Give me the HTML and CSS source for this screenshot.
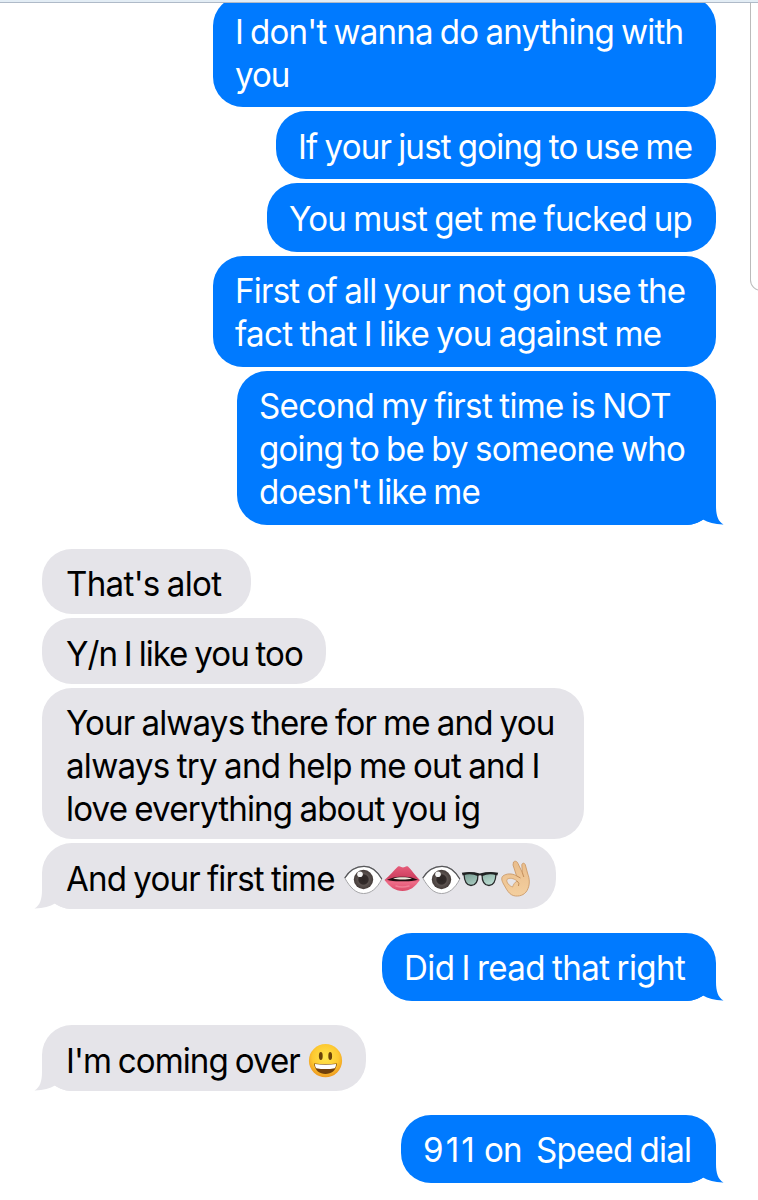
FILE: index.html
```html
<!DOCTYPE html>
<html lang="en">
<head>
<meta charset="utf-8">
<title>Messages</title>
<link rel="stylesheet" href="styles.css">
</head>
<body>
<svg class="defs" width="0" height="0" aria-hidden="true">
  <defs>
    <radialGradient id="iris"><stop offset="0" stop-color="#2c2625"/><stop offset=".48" stop-color="#332b2a"/><stop offset=".58" stop-color="#5c5350"/><stop offset="1" stop-color="#463d3b"/></radialGradient>
    <linearGradient id="lip" x1="0" y1="0" x2="0" y2="1"><stop offset="0" stop-color="#e65c7a"/><stop offset=".45" stop-color="#cf3f60"/><stop offset=".65" stop-color="#ee6c88"/><stop offset="1" stop-color="#dc4a69"/></linearGradient>
    <linearGradient id="lens" x1="0" y1="0" x2="1" y2="1"><stop offset="0" stop-color="#769b91"/><stop offset="1" stop-color="#c3e4d9"/></linearGradient>
    <linearGradient id="skin" x1="0" y1="0" x2="0" y2="1"><stop offset="0" stop-color="#e9bd8c"/><stop offset="1" stop-color="#f4cf9f"/></linearGradient>
    <radialGradient id="face" cx=".5" cy=".4" r=".6"><stop offset="0" stop-color="#ffe64d"/><stop offset=".65" stop-color="#fdc931"/><stop offset="1" stop-color="#ee9820"/></radialGradient>
    <symbol id="eye" viewBox="0 0 39 43">
      <path d="M.8 20C6 11.500 12 8.300 20 8.300S33 12.500 37.800 21C33 30.500 27 35.500 19.500 35.500S6 29.500 .8 20Z" fill="#fff" stroke="#a5a5a8"/>
      <path d="M.8 20C6 11.500 12 8.300 20 8.300S33 12.500 37.800 21" fill="none" stroke="#58585b" stroke-width="1.300"/>
      <circle cx="19.500" cy="21.500" r="9.700" fill="url(#iris)"/>
      <circle cx="16" cy="16.200" r="2.800" fill="#fff" opacity=".95"/>
    </symbol>
    <symbol id="tail" viewBox="0 0 40 34"><path d="M0 0H32V15C32 24 34 30.500 39.500 33.400C31 33.500 24 31.500 19 28.500C14 32 8 34 0 34Z"/></symbol>
  </defs>
</svg>
<div class="top-rule"></div>
<div class="side-rule"></div>
<main class="thread">
  <div class="bubble sent w1"><span class="line l1">I don't wanna do anything with</span><span class="line l2">you</span></div>
  <div class="bubble sent w2"><span class="line l3">If your just going to use me</span></div>
  <div class="bubble sent w3"><span class="line l4">You must get me fucked up</span></div>
  <div class="bubble sent w4"><span class="line l5">First of all your not gon use the</span><span class="line l6">fact that I like you against me</span></div>
  <div class="bubble sent w5 last"><span class="line l7">Second my first time is NOT</span><span class="line l8">going to be by someone who</span><span class="line l9">doesn't like me</span><svg class="tail"><use href="#tail"/></svg></div>
  <div class="bubble received w6"><span class="line l10">That's alot</span></div>
  <div class="bubble received w7"><span class="line l11">Y/n I like you too</span></div>
  <div class="bubble received w8"><span class="line l12">Your always there for me and you</span><span class="line l13">always try and help me out and I</span><span class="line l14">love everything about you ig</span></div>
  <div class="bubble received w9 last">
    <div class="row"><span class="line l15">And your first time</span>
      <svg class="emoji"><use href="#eye"/></svg>
      <svg class="emoji" viewBox="0 0 39 43"><path d="M1.500 22C7 17.500 11 12 15 8.500C17 7.500 18.500 9.500 20 9.500S23 7.500 25 8.500C29 12 32 17.500 36.800 22C32 29 27 33 19.500 33S7 29 1.500 22Z" fill="url(#lip)"/><path d="M4 21.800C10 19.300 14 18.300 19.500 18.800C25 18.300 29 19.300 35 21.800C29 23.600 24 23.300 19.500 23.300S9 23.600 4 21.800Z" fill="#210d11"/><path d="M10 20.400C15 18.700 24 18.700 29 20.400C24 21.900 15 21.900 10 20.400Z" fill="#eee9dc"/><path d="M13 28Q19 30 26 28" fill="none" stroke="#f797aa" stroke-width="1.500" stroke-linecap="round" opacity=".6"/></svg>
      <svg class="emoji"><use href="#eye"/></svg>
      <svg class="emoji" viewBox="0 0 39 43"><path d="M3 16Q10 14 17 16.500Q17 27.500 10 27.500Q3.500 27.500 3 16ZM21 16.500Q28 14 35 16Q34.500 27.500 28 27.500Q21 27.500 21 16.500Z" fill="url(#lens)" stroke="#292b2c" stroke-width="1.300"/><path d="M.8 14.700Q10 13 18.800 15.500Q28 13 37.200 14.700L36.300 17.500Q28 15 21.500 18Q19 16.500 16.500 18Q10 15 1.700 17.500Z" fill="#202223"/></svg>
      <svg class="emoji" viewBox="0 0 39 43"><path d="M13.500 4C15 2.500 17.200 3.300 18 5.500L22.300 14.500L21.800 7C22 4.700 24.600 4.600 25.300 6.800L27.800 16C29.500 20 30 26 28 30.500C26 36 21 38.500 15.500 38C9 37.500 6.500 31 3.500 26C1.500 22.500 1 19.500 3 18C6 15.500 12 15 16.500 17.800L13 7Z" fill="url(#skin)" stroke="#c8935e" stroke-width=".8"/><path d="M7 21.500C9 19.500 13.500 20 17 23C14.500 24.500 13.500 26.500 12.500 29C9.500 28 6 24.500 7 21.500Z" fill="#e5e4e9" stroke="#c8935e" stroke-width=".7"/><path d="M16.500 17.800L20.500 20M17 23Q20 25 18.500 28M22.300 14.500L23.800 19" fill="none" stroke="#b67f4b" stroke-width=".8"/></svg>
    </div>
    <svg class="tail"><use href="#tail"/></svg>
  </div>
  <div class="bubble sent w10 last"><span class="line l16">Did I read that right</span><svg class="tail"><use href="#tail"/></svg></div>
  <div class="bubble received w11 last">
    <div class="row"><span class="line l17">I'm coming over</span>
      <svg class="emoji" viewBox="0 0 39 43"><circle cx="17.500" cy="20.700" r="16.600" fill="url(#face)"/><ellipse cx="12.800" cy="16" rx="1.900" ry="4.100" fill="#6b4309"/><ellipse cx="22.200" cy="16" rx="1.900" ry="4.100" fill="#6b4309"/><path d="M6 23.500Q17.500 25 29 23.500C28 30.500 23.500 34 17.500 34S7 30.500 6 23.500Z" fill="#713f0b"/><path d="M6.800 24Q17.500 25.500 28.200 24Q27.900 27 26.700 28.200Q17.500 30 8.300 28.200Q7.100 27 6.800 24Z" fill="#fff"/></svg>
    </div>
    <svg class="tail"><use href="#tail"/></svg>
  </div>
  <div class="bubble sent w12 last"><span class="line l18"><span class="digits">911</span> on&nbsp; Speed dial</span><svg class="tail"><use href="#tail"/></svg></div>
</main>
</body>
</html>
```
FILE: styles.css
```css
* { box-sizing: border-box; }
body { margin: 0; height: 1200px; overflow: hidden; position: relative; background: #fff; font-family: Inter, "Liberation Sans", sans-serif; font-size: 34.5px; line-height: 42.85px; letter-spacing: -.86px; word-spacing: -1.5px; }
.defs { position: absolute; }
.top-rule { position: absolute; z-index: 2; top: 0; left: 0; width: 100%; height: 3px; background: #e3edf5; border-bottom: 1px solid #afbac8; }
.side-rule { position: absolute; top: 0; left: 750px; width: 20px; height: 291px; border: 1px solid #bbb; border-top: 0; border-radius: 0 0 0 11px; }
.thread { display: flex; flex-direction: column; gap: 3.9px; margin-top: -4px; padding: 0 42px; }
.bubble { position: relative; isolation: isolate; border-radius: 30px; white-space: nowrap; flex: none; }
.sent { align-self: flex-end; background: #007aff; color: #fff; fill: #007aff; padding: 14.700px 0 10.850px 22px; }
.received { align-self: flex-start; background: #e5e4e9; color: #000; fill: #e5e4e9; padding: 14.600px 0 8.250px 24px; }
.line { display: block; transform: scaleX(.96); transform-origin: 0 0; }
.row { display: flex; height: 42.85px; }
.row .line { flex: none; }
.emoji { width: 39px; height: 43px; flex: none; }
.tail { position: absolute; z-index: -1; width: 40px; height: 34px; bottom: 0; right: -8px; }
.received .tail { right: auto; left: -8px; transform: scaleX(-1); }
.last { margin-bottom: 20px; }
.w1 { width: 503px; }
.w2 { width: 440px; }
.w3 { width: 449px; }
.w4 { width: 503px; }
.w5 { width: 479px; }
.w6 { width: 209px; }
.w7 { width: 283.500px; }
.w8 { width: 542px; }
.w9 { width: 514px; }
.w10 { width: 334px; }
.w11 { width: 324px; }
.w12 { width: 315px; }
.l2 { letter-spacing: -1.1px; }
.l4 { letter-spacing: -.79px; }
.l5, .l8 { letter-spacing: -.82px; }
.l6 { letter-spacing: -.73px; }
.l7 { letter-spacing: -.7px; }
.l9 { letter-spacing: -.92px; }
.l10 { letter-spacing: -.72px; }
.l11 { letter-spacing: -1.04px; }
.l12 { letter-spacing: -.89px; }
.l13 { letter-spacing: -.76px; }
.l15 { width: 278px; }
.l16 { letter-spacing: -.67px; }
.l17 { width: 242px; letter-spacing: -1px; }
.l18 { letter-spacing: -.82px; }
.digits { letter-spacing: 2.2px; }
```
